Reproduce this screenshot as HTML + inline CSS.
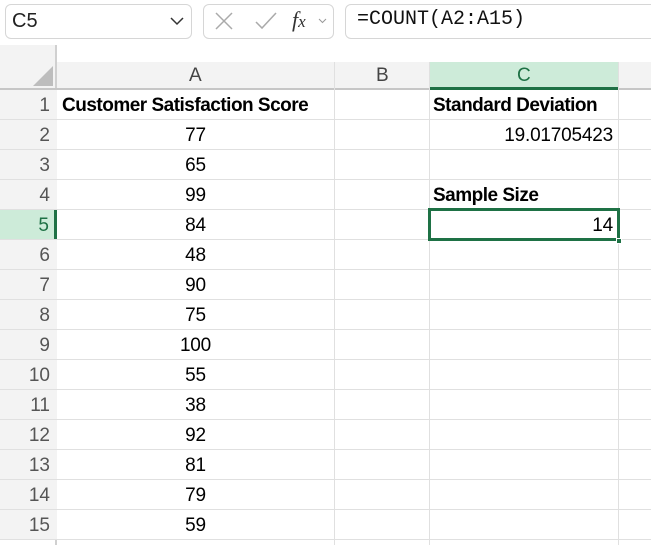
<!DOCTYPE html>
<html><head><meta charset="utf-8"><style>
*{margin:0;padding:0;box-sizing:border-box}
body{width:651px;height:545px;overflow:hidden;background:#fff;font-family:"Liberation Sans",sans-serif;position:relative}
.a{position:absolute}
.box{position:absolute;border:1px solid #d6d6d6;border-radius:6px;background:#fff}
.h{position:absolute;background:#e0e0e0}
.v{position:absolute;background:#e0e0e0;width:1px}
.rn{position:absolute;left:0;width:57px;height:30px;text-align:right;padding-right:7px;font-size:19px;color:#555;line-height:32px;background:#f3f3f3}
.c{position:absolute;height:30px;line-height:32px;font-size:19px;color:#000;letter-spacing:-0.2px}
.b{font-weight:bold;letter-spacing:-0.5px}
</style></head><body>
<div class="box" style="left:5px;top:4px;width:187px;height:35px"></div>
<div class="a" style="left:12px;top:10px;font-size:20px;line-height:22px;color:#222">C5</div>
<svg class="a" style="left:170px;top:16px" width="14" height="10"><path d="M1 2 L7 8 L13 2" fill="none" stroke="#333" stroke-width="1.5"/></svg>
<div class="box" style="left:203px;top:4px;width:131px;height:35px"></div>
<svg class="a" style="left:214px;top:11px" width="20" height="20"><path d="M2 2 L18 18 M18 2 L2 18" stroke="#aaa" stroke-width="1.5"/></svg>
<svg class="a" style="left:254px;top:11px" width="24" height="20"><path d="M2 11 L8 17 L22 2" fill="none" stroke="#aaa" stroke-width="1.5"/></svg>
<div class="a" style="left:292px;top:7px;font-size:22px;font-style:italic;font-family:'Liberation Serif',serif;color:#333">f<span style="font-size:17px">x</span></div>
<svg class="a" style="left:318px;top:18px" width="9" height="6"><path d="M1 1 L4.5 4.5 L8 1" fill="none" stroke="#999" stroke-width="1"/></svg>
<div class="box" style="left:345px;top:4px;width:320px;height:35px"></div>
<div class="a" style="left:357px;top:9px;font-family:'Liberation Mono',monospace;font-size:20px;line-height:22px;color:#111">=COUNT(A2:A15)</div>

<div class="a" style="left:0;top:45px;width:57px;height:45px;background:#f3f3f3"></div>
<div class="a" style="left:57px;top:62px;width:594px;height:27px;background:#f3f3f3"></div>
<svg class="a" style="left:33px;top:66px" width="20" height="20"><path d="M20 0 L20 20 L0 20 Z" fill="#bdbdbd"/></svg>
<div class="a" style="left:55px;top:45px;width:2px;height:500px;background:#d0d0d0"></div>
<div class="a" style="left:0;top:88px;width:651px;height:2px;background:#c6c6c6"></div>
<div class="a" style="left:429px;top:62px;width:189px;height:26px;background:#cdebd9"></div>
<div class="a" style="left:429px;top:87px;width:190px;height:3px;background:#1e7145"></div>
<div class="a" style="left:189px;top:63px;font-size:19px;line-height:26px;color:#444">A</div>
<div class="a" style="left:376px;top:63px;font-size:19px;line-height:26px;color:#444">B</div>
<div class="a" style="left:517px;top:63px;font-size:19px;line-height:26px;color:#1e7145">C</div>
<div class="v" style="left:334px;top:62px;height:483px"></div>
<div class="v" style="left:429px;top:62px;height:483px"></div>
<div class="v" style="left:618px;top:62px;height:483px"></div>

<div id="rows"></div>
<script>
var vals=["Customer Satisfaction Score",77,65,99,84,48,90,75,100,55,38,92,81,79,59];
var h="";
for(var i=0;i<15;i++){var t=90+i*30;
h+='<div class="h" style="left:0;top:'+(t+29)+'px;width:651px;height:1px"></div>';
h+='<div class="rn" style="top:'+t+'px;height:29px;'+(i==4?'background:#cdebd9;color:#1e7145;border-right:3px solid #1e7145;padding-right:5px':'')+'">'+(i+1)+'</div>';
if(i==0)h+='<div class="c b" style="left:62px;top:'+t+'px">'+vals[i]+'</div>';
else h+='<div class="c" style="left:57px;width:277px;text-align:center;top:'+t+'px">'+vals[i]+'</div>';}
document.getElementById('rows').innerHTML=h;
</script>
<div class="c b" style="left:433px;top:90px">Standard Deviation</div>
<div class="c" style="left:429px;width:184px;text-align:right;top:120px">19.01705423</div>
<div class="c b" style="left:433px;top:180px">Sample Size</div>
<div class="a" style="left:428px;top:208px;width:192px;height:33px;border:3px solid #1e7145"></div>
<div class="c" style="left:429px;width:184px;text-align:right;top:210px">14</div>
<div class="a" style="left:616px;top:238px;width:6px;height:6px;background:#1e7145;border:1px solid #fff"></div>
</body></html>
